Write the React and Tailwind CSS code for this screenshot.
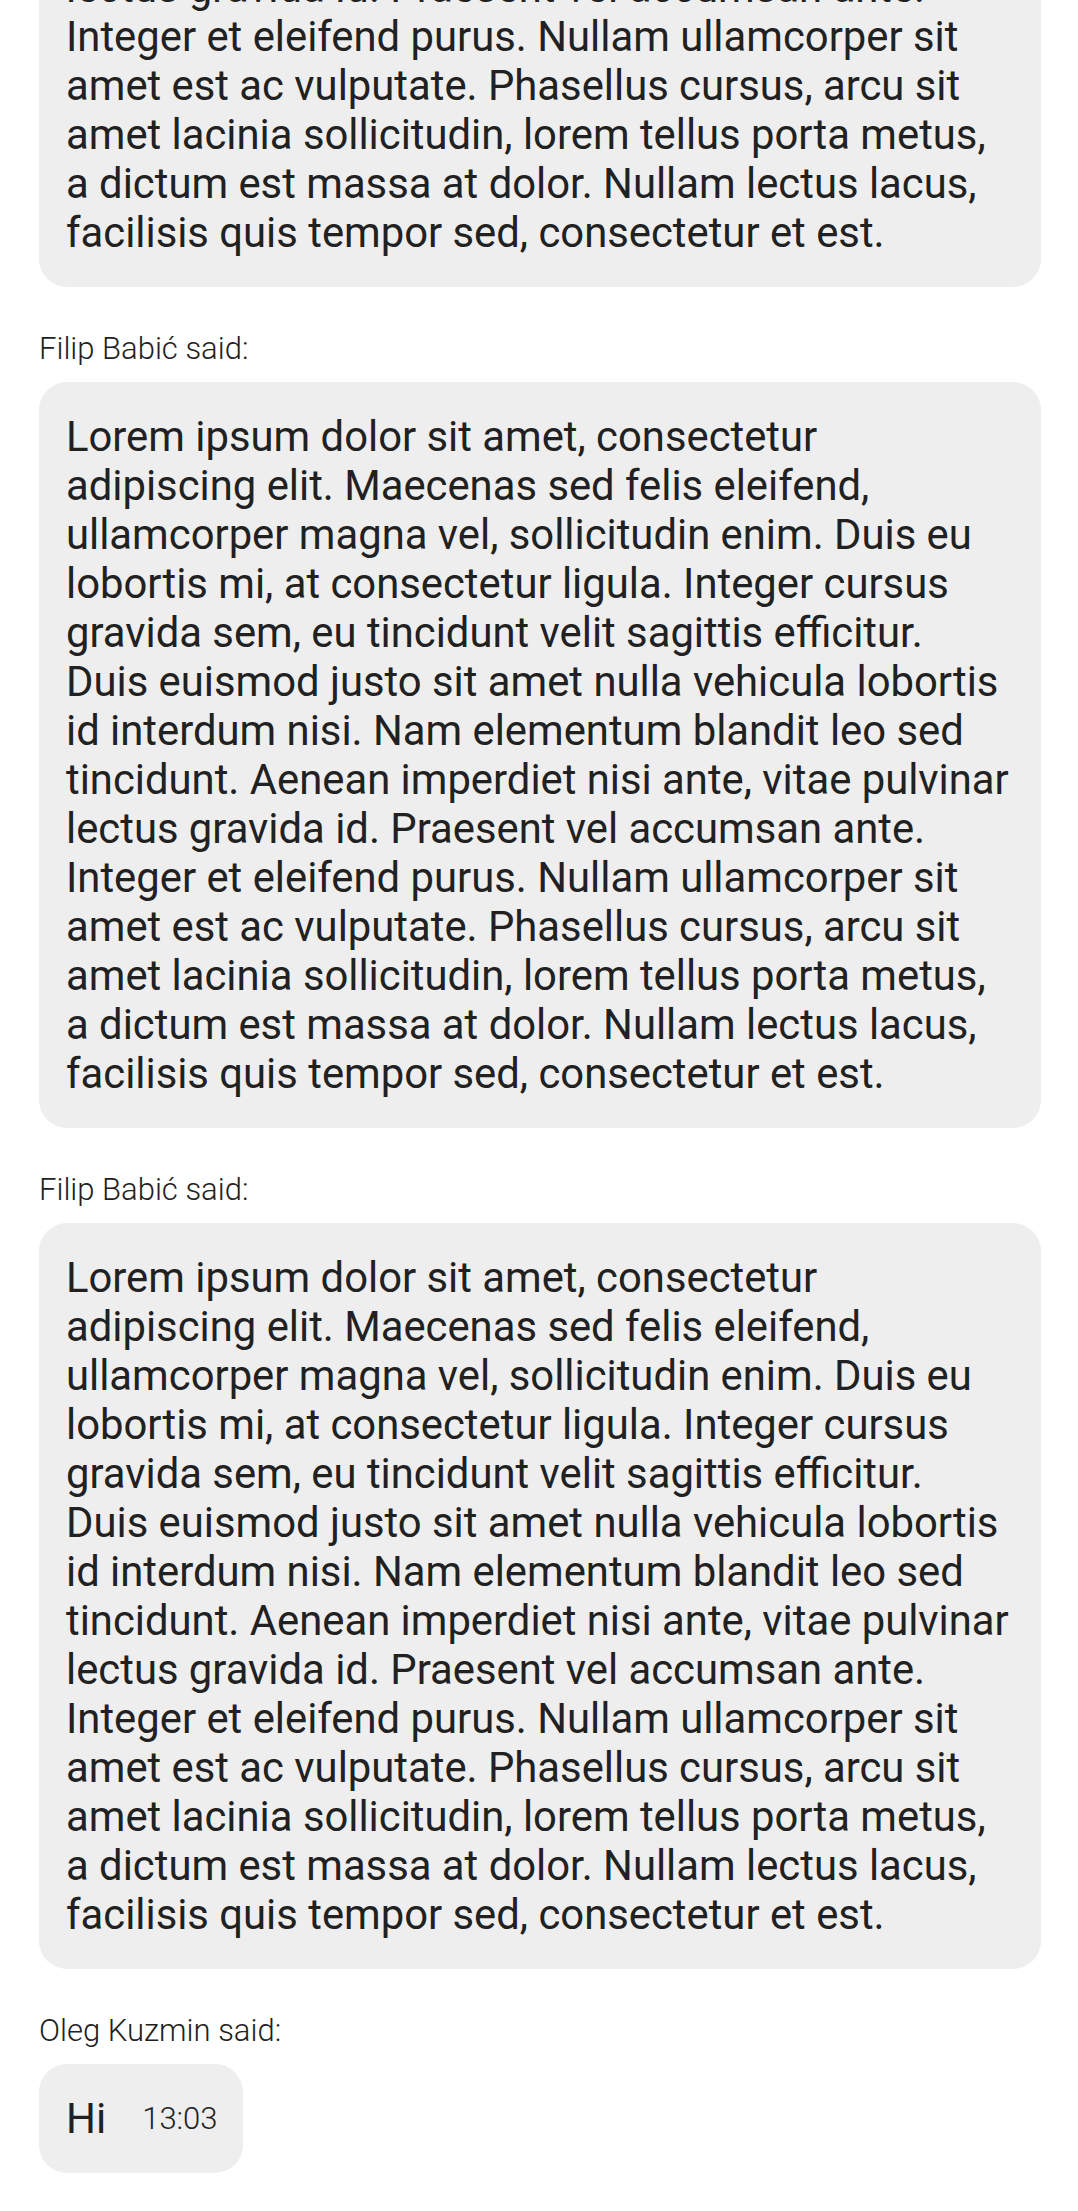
import React from "react";

const LINES = [
  "Lorem ipsum dolor sit amet, consectetur",
  "adipiscing elit. Maecenas sed felis eleifend,",
  "ullamcorper magna vel, sollicitudin enim. Duis eu",
  "lobortis mi, at consectetur ligula. Integer cursus",
  "gravida sem, eu tincidunt velit sagittis efficitur.",
  "Duis euismod justo sit amet nulla vehicula lobortis",
  "id interdum nisi. Nam elementum blandit leo sed",
  "tincidunt. Aenean imperdiet nisi ante, vitae pulvinar",
  "lectus gravida id. Praesent vel accumsan ante.",
  "Integer et eleifend purus. Nullam ullamcorper sit",
  "amet est ac vulputate. Phasellus cursus, arcu sit",
  "amet lacinia sollicitudin, lorem tellus porta metus,",
  "a dictum est massa at dolor. Nullam lectus lacus,",
  "facilisis quis tempor sed, consectetur et est.",
];

function Label({ name }) {
  return (
    <div className="mt-[43px] text-[31px] leading-[38px] font-light text-[#212121]">
      {name} said:
    </div>
  );
}

function Bubble() {
  return (
    <div className="mt-[14px] rounded-[28px] bg-[#eeeeee] pl-[27px] pr-[22px] py-[30px] text-[41.8px] leading-[49px] text-[#212121]">
      {LINES.map((l, i) => (
        <span key={i} className="block whitespace-nowrap">
          {l}
        </span>
      ))}
    </div>
  );
}

export default function App() {
  return (
    <div className="min-h-screen overflow-hidden bg-white pl-[39px] pr-[37px] pb-[38px] font-['Roboto','Liberation_Sans',sans-serif]">
      <div className="-mt-[473px] flex flex-col">
        <Bubble />
        <Label name="Filip Babić" />
        <Bubble />
        <Label name="Filip Babić" />
        <Bubble />
        <Label name="Oleg Kuzmin" />
        <div className="flex">
          <div className="mt-[14px] flex items-center rounded-[28px] bg-[#eeeeee] pl-[27px] pr-[26px] py-[30px] text-[#212121]">
            <span className="text-[42px] leading-[49px]">Hi</span>
            <span className="ml-[36px] text-[31px] leading-[49px] font-light">13:03</span>
          </div>
        </div>
      </div>
    </div>
  );
}
